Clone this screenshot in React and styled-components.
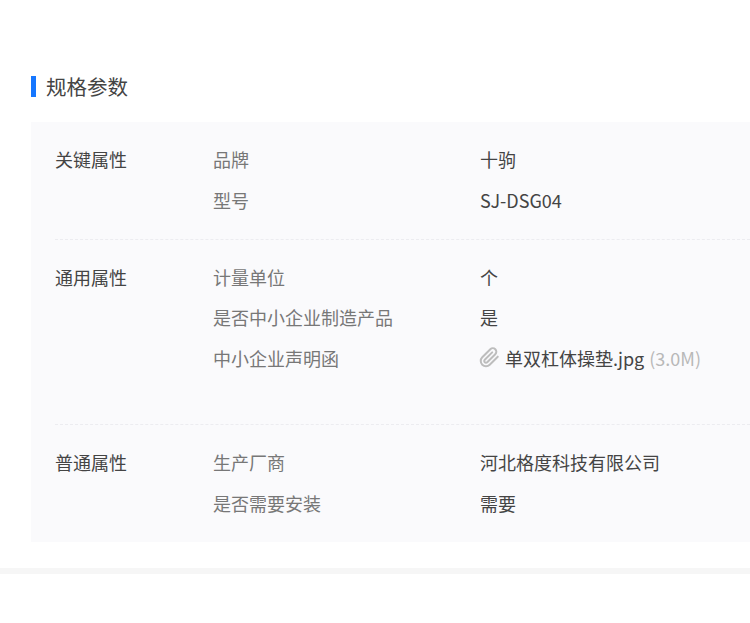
import React from 'react';
import styled, { createGlobalStyle } from 'styled-components';

const groups = [
  {
    name: '关键属性',
    rows: [
      { label: '品牌', value: '十驹' },
      { label: '型号', value: 'SJ-DSG04' },
    ],
  },
  {
    name: '通用属性',
    tall: true,
    rows: [
      { label: '计量单位', value: '个' },
      { label: '是否中小企业制造产品', value: '是' },
      { label: '中小企业声明函', file: '单双杠体操垫.jpg', size: '(3.0M)' },
    ],
  },
  {
    name: '普通属性',
    rows: [
      { label: '生产厂商', value: '河北格度科技有限公司' },
      { label: '是否需要安装', value: '需要' },
    ],
  },
];

function ClipIcon() {
  return (
    <svg width="21" height="21" viewBox="0 0 24 24" fill="none" stroke="#bdbdbd" strokeWidth="2.3" strokeLinecap="round" strokeLinejoin="round">
      <path d="M21.44 11.05l-9.19 9.19a6 6 0 0 1-8.49-8.49l9.19-9.19a4 4 0 0 1 5.66 5.66l-9.2 9.19a2 2 0 0 1-2.83-2.83l8.49-8.48" />
    </svg>
  );
}

export default function App() {
  return (
    <Page>
      <GlobalStyle />
      <Section>
        <Title>规格参数</Title>
        <Panel>
          {groups.map((group, index) => (
            <Group key={group.name} $first={index === 0} $tall={group.tall}>
              <GroupName>{group.name}</GroupName>
              <Rows>
                {group.rows.map((row) => (
                  <Row key={row.label}>
                    <Label>{row.label}</Label>
                    {row.file ? (
                      <FileValue>
                        <ClipIcon />
                        <span>{row.file}</span>
                        <FileSize>{row.size}</FileSize>
                      </FileValue>
                    ) : (
                      <Value>{row.value}</Value>
                    )}
                  </Row>
                ))}
              </Rows>
            </Group>
          ))}
        </Panel>
      </Section>
      <Divider />
    </Page>
  );
}

const GlobalStyle = createGlobalStyle`
  html, body {
    margin: 0;
    background: #fff;
    overflow: hidden;
  }
  * {
    box-sizing: border-box;
  }
`;

const Page = styled.div`
  width: 750px;
  height: 623px;
  overflow: hidden;
  font-family: 'Noto Sans CJK SC', 'Noto Sans', sans-serif;
`;

const Section = styled.div`
  padding: 72px 0 26px 31px;
`;

const Title = styled.h2`
  margin: 0 0 22px;
  height: 28px;
  display: flex;
  align-items: center;
  font-weight: 400;
  font-size: 20.5px;
  line-height: 28px;
  color: #444;

  &::before {
    content: '';
    width: 5px;
    height: 21px;
    margin-right: 10px;
    background: #1677ff;
  }
`;

const Panel = styled.div`
  background: #fafafc;
  padding: 17px 0 19px 24px;
`;

const Group = styled.div`
  display: flex;
  padding-top: ${(p) => (p.$first ? '0' : '17px')};
  padding-bottom: ${(p) => (p.$tall ? '46px' : '19px')};
  border-top: ${(p) => (p.$first ? 'none' : '1px dashed #ececf0')};

  &:last-child {
    padding-bottom: 0;
  }
`;

const GroupName = styled.div`
  width: 158px;
  font-size: 18px;
  line-height: 40px;
  height: 40px;
  color: #444;
`;

const Rows = styled.div`
  flex: 1;
  display: flex;
  flex-direction: column;
`;

const Row = styled.div`
  display: flex;
  height: 40.4px;
  align-items: center;
  font-size: 18px;
`;

const Label = styled.div`
  width: 267px;
  color: #777;
`;

const Value = styled.div`
  color: #444;
`;

const FileValue = styled.div`
  display: flex;
  align-items: center;
  gap: 5px;
  margin-left: -1px;
  color: #444;
`;

const FileSize = styled.span`
  color: #b8b8b8;
`;

const Divider = styled.div`
  height: 6px;
  background: #f6f6f6;
`;
